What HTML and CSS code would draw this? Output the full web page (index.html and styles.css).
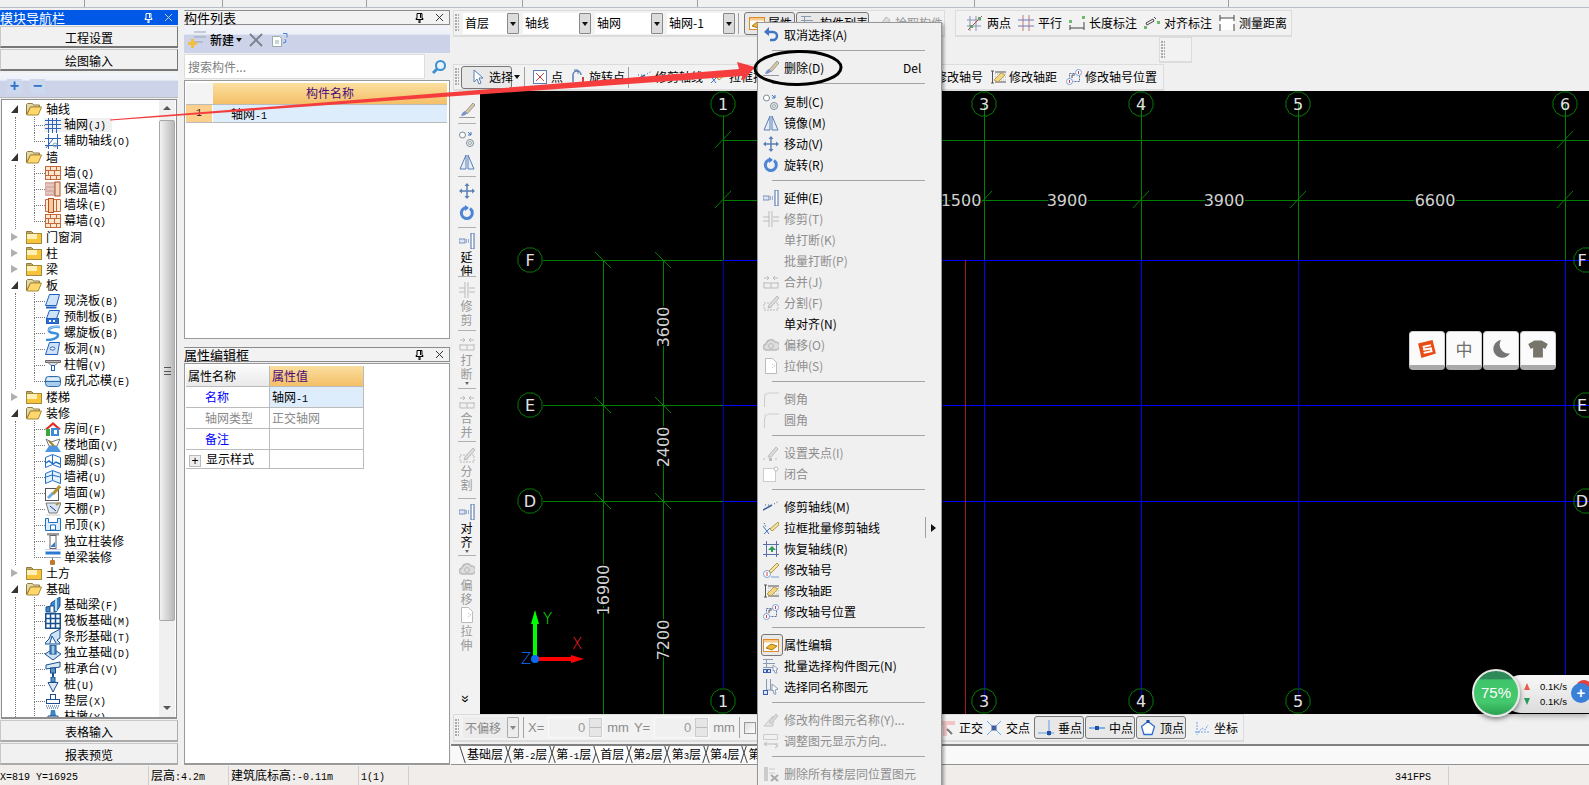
FILE: index.html
```html
<!DOCTYPE html>
<html lang="zh">
<head>
<meta charset="utf-8">
<title>绘图输入</title>
<link rel="stylesheet" href="styles.css">
</head>
<body>
<svg class="defs" width="0" height="0" aria-hidden="true">
<polygon id="oct" points="12,3.200 8.800,8.800 3.200,12 -3.200,12 -8.800,8.800 -12,3.200 -12,-3.200 -8.800,-8.800 -3.200,-12 3.200,-12 8.800,-8.800 12,-3.200"/>
<symbol id="grid" viewBox="0 0 16 16"><path d="M0 3.500h16M0 7.500h16M0 11.500h16M3.500 1v15M7.500 1v15M11.500 1v15" stroke="#2f62c0" fill="none"/></symbol>
<symbol id="aux" viewBox="0 0 16 16"><path d="M3.500 1v15M12.500 1v15M0 5.500h16M0 12.500h16M1 15L8 6" stroke="#2f62c0" fill="none"/><circle cx="10" cy="12" r="2" fill="none" stroke="#8aa"/></symbol>
<symbol id="brick" viewBox="0 0 16 16"><rect x=".5" y="1.500" width="15" height="13" fill="#fbe6d2" stroke="#c46a3a"/><path d="M1 5.500h14M1 10.500h14M5.500 2v3M11.500 2v3M3.500 6v4M9.500 6v4M5.500 11v3M11.500 11v3" stroke="#c46a3a" fill="none"/></symbol>
<symbol id="insul" viewBox="0 0 16 16"><rect x="0" y="1" width="10" height="14" fill="#d9b0a8"/><path d="M1 4h8M2 8h7M1 12h7" stroke="#efdcd8"/><rect x="10" y="1" width="5" height="14" fill="#f3d8c0" stroke="#a8522a"/></symbol>
<symbol id="pier" viewBox="0 0 16 16"><path d="M.5 2.500h15v12h-15z" fill="#fbe6d2" stroke="#c46a3a"/><rect x="3.500" y="1.500" width="5" height="14" fill="#f7c9a0" stroke="#b5501e"/><path d="M11.500 3v11" stroke="#c46a3a"/></symbol>
<symbol id="slab" viewBox="0 0 16 16"><path d="M4.500 1.500h10l-3 11h-11z" fill="#cfe3f8" stroke="#1f5fbf"/><path d="M1 14.500h10.500" stroke="#1f5fbf" stroke-width="2"/></symbol>
<symbol id="slab2" viewBox="0 0 16 16"><path d="M4.500 1.500h10l-3 8h-10z" fill="#cfe3f8" stroke="#1f5fbf"/><rect x="1.500" y="9.500" width="12" height="5" fill="#2d6fd0" stroke="#1f5fbf"/><path d="M4 12h2M8 12h2" stroke="#fff" stroke-width="2"/></symbol>
<symbol id="spiral" viewBox="0 0 16 16"><path d="M15 2C7 1 3 3 4 6s9 1 9 4-5 5-12 5" fill="none" stroke="#3d8fdc" stroke-width="2.500"/><path d="M15 2C7 1 3 3 4 6" fill="none" stroke="#bfe0fb"/></symbol>
<symbol id="hole" viewBox="0 0 16 16"><path d="M4.500 1.500h10l-2 12h-12z" fill="#cfe3f8" stroke="#1f5fbf"/><ellipse cx="7.500" cy="7.500" rx="2.500" ry="1.500" fill="#fff" stroke="#1f5fbf"/></symbol>
<symbol id="cap" viewBox="0 0 16 16"><path d="M.5 3.500h15v2h-15z" fill="#bbb" stroke="#666"/><path d="M3 5.500l3 3h4l3-3z" fill="#ddd" stroke="#777"/><rect x="6.500" y="8.500" width="3" height="5" fill="#fff" stroke="#1f5fbf"/></symbol>
<symbol id="core" viewBox="0 0 16 16"><rect x=".5" y="3.500" width="15" height="10" rx="3" fill="#a9cdec" stroke="#2f6ca8"/><path d="M1 8.500h14" stroke="#2f6ca8"/><rect x="2" y="4.500" width="12" height="3" rx="1" fill="#dff0fb"/></symbol>
<symbol id="room" viewBox="0 0 16 16"><path d="M0 8l8-7 8 7-2 1-6-5-6 5z" fill="#e0302a"/><rect x="1" y="8" width="4" height="7" fill="#3ca63c"/><rect x="6" y="7" width="8" height="8" fill="#3f8ad8"/><rect x="9" y="9" width="3" height="4" fill="#fff"/></symbol>
<symbol id="floor" viewBox="0 0 16 16"><path d="M1 2l5 3 9-3-3 7H4z" fill="#fff" stroke="#777"/><path d="M0 15l4-6h8l4 6z" fill="#4c97e0"/><path d="M4 4l5 5" stroke="#a08030" stroke-width="2"/></symbol>
<symbol id="skirt" viewBox="0 0 16 16"><path d="M.5 4.500l7-3 8 3v10l-8-3-7 3z" fill="#fff" stroke="#1f6fc8"/><path d="M1 10l3-2 4 3 3-2 4 2" fill="none" stroke="#1f6fc8" stroke-width="1.500"/><path d="M7.500 2v9" stroke="#1f6fc8"/></symbol>
<symbol id="dado" viewBox="0 0 16 16"><path d="M.5 4.500l7-3 8 3v10l-8-3-7 3z" fill="#e4f1fb" stroke="#1f6fc8"/><path d="M1 8l6-2 8 2" fill="none" stroke="#1f6fc8"/><path d="M7.500 2v9" stroke="#1f6fc8"/></symbol>
<symbol id="wface" viewBox="0 0 16 16"><rect x=".5" y="3.500" width="13" height="12" fill="#fff" stroke="#555"/><path d="M3 13L8 8" stroke="#6fa8e0" stroke-width="3"/><path d="M8 9l7-8" stroke="#b09030" stroke-width="3"/></symbol>
<symbol id="ceil" viewBox="0 0 16 16"><path d="M1 2h15l-4 10H4z" fill="#d6e6f7" stroke="#777"/><path d="M5 5l6 5" stroke="#335" /><path d="M11 4l3-2" stroke="#b09030" stroke-width="2"/><path d="M1 14h14" stroke="#ccc"/></symbol>
<symbol id="dropc" viewBox="0 0 16 16"><path d="M.5 1.500h3v4h9v-4h3v12h-15z" fill="#dceefc" stroke="#1f6fc8"/><path d="M5.500 8h5v5h-5z" fill="#fff" stroke="#1f6fc8"/></symbol>
<symbol id="colf" viewBox="0 0 16 16"><rect x="2" y="0" width="12" height="2.500" fill="#999"/><rect x="5" y="2.500" width="6" height="13" fill="#fff" stroke="#666"/><path d="M6 13l4-4v5H6z" fill="#2f7fd0"/></symbol>
<symbol id="beamf" viewBox="0 0 16 16"><rect x=".5" y="2.500" width="15" height="3" fill="#2a78d0"/><path d="M0 0h16M0 8.500h16" stroke="#9ab"/><rect x="5" y="11" width="5" height="5" rx="1" fill="#c07a30"/><rect x="7" y="9" width="1" height="2" fill="#777"/></symbol>
<symbol id="fbeam" viewBox="0 0 16 16"><path d="M6 6l9-6v9l-4 6H1V10l5-1z" fill="#3f86c8" stroke="#174f8f"/><path d="M5 15V9h4v6" fill="#fff" stroke="#174f8f"/><path d="M11 2v12" stroke="#bcdcf5" stroke-width="2"/></symbol>
<symbol id="raft" viewBox="0 0 16 16"><rect x=".5" y=".5" width="15" height="15" fill="#fff" stroke="#174f8f" stroke-width="2"/><path d="M5.500 1v14M10.500 1v14M1 5.500h14M1 10.500h14" stroke="#174f8f" stroke-width="1.500"/></symbol>
<symbol id="strip" viewBox="0 0 16 16"><path d="M6 5l9-5v9l-3 2 3 3v1H0v-1l4-4z" fill="#cfe3f8" stroke="#174f8f"/><path d="M5 14l2-7 4 7" fill="#fff" stroke="#174f8f"/></symbol>
<symbol id="iso" viewBox="0 0 16 16"><path d="M0 9l8-5 8 5-8 6z" fill="#cfe3f8" stroke="#174f8f"/><rect x="5" y="0" width="6" height="9" fill="#5c94c8" stroke="#174f8f"/><path d="M8 1v8" stroke="#dff"/></symbol>
<symbol id="pcap" viewBox="0 0 16 16"><path d="M1 4l14-3v5L1 8z" fill="#dbe7f3" stroke="#174f8f"/><rect x="5.500" y="7" width="5" height="5" fill="#5c94c8" stroke="#174f8f"/><path d="M8 12v4" stroke="#174f8f" stroke-width="2"/></symbol>
<symbol id="pile" viewBox="0 0 16 16"><rect x="6" y="0" width="4" height="5" fill="#5c94c8" stroke="#174f8f"/><path d="M3 5.500h10L10 11l-2 4-2-4z" fill="#dbe7f3" stroke="#174f8f"/></symbol>
<symbol id="cush" viewBox="0 0 16 16"><rect x="5.500" y="1.500" width="5" height="5" fill="#fff" stroke="#174f8f"/><rect x="1.500" y="6.500" width="13" height="4" fill="#fff" stroke="#174f8f"/><path d="M1 13h14M2 15h12" stroke="#174f8f" stroke-dasharray="1 1"/></symbol>
<symbol id="mpier" viewBox="0 0 16 16"><path d="M6 1h4l1 6H5z" fill="#3f86c8"/><path d="M3 7h10v8H3z" fill="#dbe7f3" stroke="#174f8f"/></symbol>
<symbol id="fopen" viewBox="0 0 16 14"><path d="M.5 12.500V2.500l1-1h5l1 1.500h6v2h-9L.5 12.500z" fill="#e7d9a5" stroke="#8f7a40"/><path d="M.8 13l3.700-8h11l-3.300 8z" fill="#ffd76a" stroke="#a68a3c"/></symbol>
<symbol id="fclosed" viewBox="0 0 16 14"><path d="M.5 3V1.500h5L7 3z" fill="#e7d9a5" stroke="#8f7a40"/><rect x=".5" y="3.500" width="15" height="10" fill="#f7c33a" stroke="#a68a3c"/><rect x="1" y="4" width="10" height="5" fill="#fff0b5"/></symbol>
<symbol id="undo" viewBox="0 0 16 16"><path d="M4 5h6a4 4 0 010 8H7" fill="none" stroke="#3f75c4" stroke-width="2.500"/><path d="M6 0v9L1 5z" fill="#3f75c4"/></symbol>
<symbol id="brush" viewBox="0 0 16 16"><path d="M6 10L14 1l2 2-8 9z" fill="#d8c8a0" stroke="#999"/><path d="M2 14c1-3 2-4 4-5l2 2c-1 2-3 3-6 3z" fill="#7b91c8"/><path d="M0 15.500h16" stroke="#9a9a9a"/></symbol>
<symbol id="copy" viewBox="0 0 16 16"><circle cx="3.500" cy="4" r="3" fill="#fff" stroke="#7a8a9a"/><circle cx="11" cy="12" r="3.500" fill="none" stroke="#7a8a9a"/><circle cx="11" cy="12" r="1.500" fill="none" stroke="#9aa"/><path d="M9 1l3 3m0-3v3H9" fill="none" stroke="#3f75c4"/></symbol>
<symbol id="mirror" viewBox="0 0 16 16"><path d="M7 1L1 15h6zM9 1l6 14H9z" fill="#e4edf8" stroke="#5a7fb5"/></symbol>
<symbol id="move" viewBox="0 0 16 16"><path d="M8 1v14M1 8h14" stroke="#5a7fb5" stroke-width="1.500"/><path d="M8 0l2.500 3h-5zM8 16l2.500-3h-5zM0 8l3-2.500v5zM16 8l-3-2.500v5z" fill="#5a7fb5"/></symbol>
<symbol id="rot" viewBox="0 0 16 16"><path d="M11 3.500A5.500 5.500 0 118 2.500" fill="none" stroke="#4c85d8" stroke-width="3"/><path d="M6 0v6l4-3z" fill="#4c85d8"/></symbol>
<symbol id="ext" viewBox="0 0 16 16"><rect x="0" y="6" width="6" height="4" fill="#dce6f5" stroke="#4a6da8" stroke-width=".7"/><path d="M7 7h3M7 9h3" stroke="#4a6da8" stroke-dasharray="1 1"/><rect x="12" y="0" width="3" height="16" fill="#fff" stroke="#4a6da8"/></symbol>
<symbol id="trim" viewBox="0 0 16 16"><path d="M0 6h6M0 10h6M10 6h6M10 10h6" stroke="#bbb"/><path d="M6 0v16M9 0v16" stroke="#bbb"/></symbol>
<symbol id="merge" viewBox="0 0 16 16"><path d="M1 9h14v5H1zM1 9v-1M15 9V8M8 9v5" fill="none" stroke="#bbb"/><path d="M1 4h5m-2-2l2 2-2 2M15 4h-5m2-2l-2 2 2 2" fill="none" stroke="#bbb"/></symbol>
<symbol id="split" viewBox="0 0 16 16"><path d="M1 8h14v7H1zM8 8v7" fill="none" stroke="#bbb" stroke-dasharray="2 1"/><path d="M6 10l8-9 2 2-8 9-3 1z" fill="#ddd" stroke="#bbb"/></symbol>
<symbol id="offs" viewBox="0 0 16 16"><path d="M4 13a3 3 0 01-1-6 5 5 0 019-2 4 4 0 011 8z" fill="#ddd" stroke="#bbb" stroke-width="1.500"/><circle cx="8" cy="9" r="2.500" fill="none" stroke="#bbb"/></symbol>
<symbol id="strch" viewBox="0 0 16 16"><path d="M2.500.5h7l4 4v11h-11z" fill="#fff" stroke="#bbb"/><path d="M9 6l3 2-3 2" stroke="#bbb" fill="none" stroke-dasharray="1 1"/></symbol>
<symbol id="cham" viewBox="0 0 16 16"><path d="M1.500 16V7c0-3 3-5 6-5H16" fill="none" stroke="#ccc"/><path d="M1 4l3-3" stroke="#ccc" stroke-dasharray="1 1"/></symbol>
<symbol id="grip" viewBox="0 0 16 16"><path d="M6 10l7-8 2 2-7 8H5z" fill="#ddd" stroke="#bbb"/><path d="M0 14h3M12 14h3" stroke="#bbb" stroke-dasharray="2 1"/><rect x="6" y="13" width="3" height="3" fill="#bbb"/></symbol>
<symbol id="closeg" viewBox="0 0 16 16"><rect x=".5" y="2.500" width="12" height="13" fill="#fff" stroke="#ccc"/><circle cx="13" cy="3" r="2" fill="#fff" stroke="#bbb"/></symbol>
<symbol id="taxis" viewBox="0 0 16 16"><path d="M0 11L9 6" stroke="#3a5f9a" stroke-width="1.500"/><path d="M11 5l5-3M2 6h6" stroke="#3a5f9a" stroke-dasharray="1 2"/></symbol>
<symbol id="boxt" viewBox="0 0 16 16"><path d="M7 9l8-7 1 3-7 6z" fill="#f4e19a" stroke="#b09a50"/><path d="M0 6l6 8M1 14l6-6" stroke="#3f75c4"/><path d="M1 3l2 4" stroke="#3a5f9a" stroke-dasharray="1 1"/></symbol>
<symbol id="rest" viewBox="0 0 16 16"><path d="M3.500 0v16M13.500 0v16M0 3.500h16M0 13.500h16" stroke="#5a6fa8" fill="none"/><path d="M9 5l4 4H10v2H8V9H5z" fill="#2f9a5a"/></symbol>
<symbol id="eno" viewBox="0 0 16 16"><circle cx="4" cy="12" r="3.500" fill="#fff" stroke="#7ba0d8"/><path d="M4 10v4" stroke="#d04040"/><path d="M6 9l8-8 2 2-8 8z" fill="#f4e19a" stroke="#b09a50"/><path d="M8 15h8" stroke="#7ba0d8"/></symbol>
<symbol id="edist" viewBox="0 0 16 16"><path d="M1 2h3M2.500 2v12M1 14h3M5 3h11M5 13h11" stroke="#555" stroke-dasharray="none" fill="none"/><path d="M5 5h11M5 8h11M5 11h11" stroke="#bbb" stroke-dasharray="1 1"/><path d="M4 11l7-7 4 2-7 7z" fill="#f1d685" stroke="#c0a050"/></symbol>
<symbol id="epos" viewBox="0 0 16 16"><path d="M3.500 4.500h10v8h-10z" fill="none" stroke="#5a6fa8" stroke-dasharray="2 1"/><circle cx="3.500" cy="12.500" r="3" fill="#fff" stroke="#7ba0d8"/><circle cx="12.500" cy="3.500" r="3" fill="#fff" stroke="#7ba0d8"/><path d="M3.500 11v3M12.500 2v3" stroke="#d04040"/><path d="M6 6h3M6 6v3" stroke="#555"/></symbol>
<symbol id="prop" viewBox="0 0 16 16"><rect x=".5" y="2.500" width="15" height="12" fill="#fff" stroke="#e08a28"/><rect x="1" y="3" width="14" height="2.500" fill="#f7c98a"/><path d="M3 11l5-4 6 2-5 4z" fill="#f0b830" stroke="#a67c1a"/></symbol>
<symbol id="batch" viewBox="0 0 16 16"><path d="M0 1.500h10M0 5.500h12M0 9.500h10M3.500 1v9" stroke="#8a9ab5" fill="none"/><rect x=".5" y="11.500" width="3" height="3" fill="#dce6f5" stroke="#3a5fb0"/><rect x="4.500" y="11.500" width="3" height="3" fill="#dce6f5" stroke="#3a5fb0"/><path d="M10 7l5 4-2 1 1 3-2 0-1-3-1 1z" fill="#fff" stroke="#8a9ab5"/></symbol>
<symbol id="same" viewBox="0 0 16 16"><path d="M3.500 0v11M7.500 0v11M3 11h9" stroke="#8a9ab5" fill="none"/><rect x=".5" y="11.500" width="4" height="4" fill="#dce6f5" stroke="#3a5fb0"/><path d="M9 5l6 5-3 1 1 4-2 0-1-4-1 1z" fill="#fff" stroke="#8a9ab5"/></symbol>
<symbol id="renm" viewBox="0 0 16 16"><path d="M1 14L10 4v10z" fill="#e6e6e6" stroke="#c4c4c4"/><path d="M6 10l7-8 2 2-7 8z" fill="#d8d8d8" stroke="#c4c4c4"/></symbol>
<symbol id="adj" viewBox="0 0 16 16"><path d="M.5 1.500h14v5H.5z" fill="none" stroke="#ccc"/><path d="M4 9l-3 2 3 2M1 11h14M12 11l3 2-3 2" fill="none" stroke="#bbb"/></symbol>
<symbol id="delall" viewBox="0 0 16 16"><rect x="1" y="1" width="4" height="14" fill="#ccc"/><path d="M6 3h6M6 7h6" stroke="#ccc"/><path d="M8 9l7 6M15 9l-7 6" stroke="#aaa" stroke-width="2"/></symbol>
<symbol id="pick" viewBox="0 0 16 16"><path d="M3 15l2-6 5-7 4 3-5 7z" fill="#ddd" stroke="#bbb"/></symbol>
<symbol id="sel" viewBox="0 0 16 16"><path d="M4 1v12l3-3 2 5 2-1-2-5h4z" fill="#fff" stroke="#5a7fb5"/></symbol>
<symbol id="pt" viewBox="0 0 16 16"><rect x="1.500" y="1.500" width="13" height="13" fill="#fff" stroke="#5a7fb5"/><path d="M4 4l8 8M12 4l-8 8" stroke="#d04040"/></symbol>
<symbol id="rpt" viewBox="0 0 16 16"><path d="M3 13V6a4 4 0 018 0" fill="none" stroke="#5a7fb5" stroke-width="1.500"/><path d="M4 1h4v4" fill="none" stroke="#5a7fb5"/><path d="M12 8h2v6h-2z" fill="#d04040"/></symbol>
<symbol id="two" viewBox="0 0 16 16"><path d="M3 1v15M9 1v15M0 5h14M0 11h14" stroke="#8a90b5" fill="none"/><path d="M1 15L15 1" stroke="#c04040"/><rect x="3" y="10" width="3" height="3" fill="#60a860"/><rect x="11" y="2" width="3" height="3" fill="#60a860"/></symbol>
<symbol id="par" viewBox="0 0 16 16"><path d="M5 0v16M11 0v16" stroke="#c07878"/><path d="M0 5h16M0 11h16" stroke="#7078b8"/></symbol>
<symbol id="dlen" viewBox="0 0 16 16"><rect x="0" y="5" width="3" height="3" fill="#70b870"/><rect x="13" y="1" width="3" height="3" fill="#70b870"/><path d="M1 10v5M15 7v8M1 13h14" stroke="#444" fill="none"/></symbol>
<symbol id="dali" viewBox="0 0 16 16"><path d="M2 8l7-4 1 2-7 4z" fill="none" stroke="#444"/><rect x="0" y="11" width="3" height="3" fill="#70b870"/><rect x="13" y="6" width="3" height="3" fill="#70b870"/><path d="M10 2l2 2" stroke="#444"/></symbol>
<symbol id="meas" viewBox="0 0 16 16"><rect x="1" y="2" width="14" height="13" fill="#fff"/><path d="M1 0v6M15 0v6M1 3h14M1 9v7M15 9v7" stroke="#444"/></symbol>
<symbol id="ortho" viewBox="0 0 16 16"><path d="M0 3h16M6 3v13" stroke="#f2c4c4" stroke-width="4"/><path d="M8 9l5 5" stroke="#777" stroke-width="2"/></symbol>
<symbol id="cross" viewBox="0 0 16 16"><path d="M1 1l14 14M15 1L1 15" stroke="#6fa8e8"/><rect x="5.500" y="5.500" width="5" height="5" fill="#40609e"/></symbol>
<symbol id="perp" viewBox="0 0 16 16"><path d="M11 0v16M0 13h16" stroke="#5f9be0"/><rect x="9" y="11" width="4" height="4" fill="#1f4f9f"/></symbol>
<symbol id="midp" viewBox="0 0 16 16"><path d="M0 8h16" stroke="#5f9be0" stroke-width="1.500"/><rect x="6" y="6" width="4" height="4" fill="#1f4f9f"/></symbol>
<symbol id="vert" viewBox="0 0 16 16"><path d="M8 1.500l6.500 5-2.500 8H4l-2.500-8z" fill="#fff" stroke="#2f6fd0" stroke-width="1.300"/><rect x="6.500" y="0" width="3" height="3" fill="#1f4f9f"/></symbol>
<symbol id="coord" viewBox="0 0 16 16"><path d="M3 2v13M1 12h14M4 13l4-5 3 2 3-5" fill="none" stroke="#6fa8e8" stroke-dasharray="2 1"/></symbol>
<symbol id="newc" viewBox="0 0 18 18"><path d="M6 1h12M6 6h12M6 11h9" stroke="#9aa3b8"/><rect x="0" y="11" width="9" height="3" fill="#f2c040"/><rect x="3" y="8" width="3" height="9" fill="#f2c040"/></symbol>
<symbol id="xx" viewBox="0 0 16 16"><path d="M2 2l12 12M14 2L2 14" stroke="#7a7f8a" stroke-width="1.800"/></symbol>
<symbol id="cpy2" viewBox="0 0 16 16"><path d="M.5 4.500h7l2 2v8h-9z" fill="#fff" stroke="#9aa"/><path d="M3 9h4M3 11h4" stroke="#9aa"/><path d="M11 1.500h4v4M11 11l3-1-1-3" fill="none" stroke="#4c85d8"/></symbol>
<symbol id="pin" viewBox="0 0 9 10"><path d="M2 .5h5v5h1v1H1v-1h1zM4 6.500h1V10H4zM5.500 1v4" fill="none" stroke="#000"/></symbol>
<symbol id="cl" viewBox="0 0 9 9"><path d="M1 1l7 7M8 1L1 8" stroke="#333"/></symbol>
</svg>

<div class="topstrip"><i class="c1"></i><i class="c2"></i><i class="c3"></i><i class="c4"></i><i class="c5"></i><i class="c6"></i><i class="c7"></i></div>

<main class="main">
  <aside class="nav">
    <div class="title on"><span>模块导航栏</span><svg class="pin"><use href="#pin"/></svg><svg class="cl"><use href="#cl"/></svg></div>
    <button class="navbtn">工程设置</button>
    <button class="navbtn">绘图输入</button>
    <div class="bluebar nav-tools"><span class="pm">+</span><span class="pm">−</span></div>
    <div class="treebox">
      <div class="tree">
        <div class="row"><b class="exp open"></b><svg class="fold"><use href="#fopen"/></svg><span>轴线</span></div>
        <div class="kids">
          <div class="kid sel-k"><svg class="ki"><use href="#grid"/></svg><span>轴网<em>(J)</em></span></div>
          <div class="kid"><svg class="ki"><use href="#aux"/></svg><span>辅助轴线<em>(O)</em></span></div>
        </div>
        <div class="row"><b class="exp open"></b><svg class="fold"><use href="#fopen"/></svg><span>墙</span></div>
        <div class="kids">
          <div class="kid"><svg class="ki"><use href="#brick"/></svg><span>墙<em>(Q)</em></span></div>
          <div class="kid"><svg class="ki"><use href="#insul"/></svg><span>保温墙<em>(Q)</em></span></div>
          <div class="kid"><svg class="ki"><use href="#pier"/></svg><span>墙垛<em>(E)</em></span></div>
          <div class="kid"><svg class="ki"><use href="#brick"/></svg><span>幕墙<em>(Q)</em></span></div>
        </div>
        <div class="row"><b class="exp"></b><svg class="fold"><use href="#fclosed"/></svg><span>门窗洞</span></div>
        <div class="row"><b class="exp"></b><svg class="fold"><use href="#fclosed"/></svg><span>柱</span></div>
        <div class="row"><b class="exp"></b><svg class="fold"><use href="#fclosed"/></svg><span>梁</span></div>
        <div class="row"><b class="exp open"></b><svg class="fold"><use href="#fopen"/></svg><span>板</span></div>
        <div class="kids">
          <div class="kid"><svg class="ki"><use href="#slab"/></svg><span>现浇板<em>(B)</em></span></div>
          <div class="kid"><svg class="ki"><use href="#slab2"/></svg><span>预制板<em>(B)</em></span></div>
          <div class="kid"><svg class="ki"><use href="#spiral"/></svg><span>螺旋板<em>(B)</em></span></div>
          <div class="kid"><svg class="ki"><use href="#hole"/></svg><span>板洞<em>(N)</em></span></div>
          <div class="kid"><svg class="ki"><use href="#cap"/></svg><span>柱帽<em>(V)</em></span></div>
          <div class="kid"><svg class="ki"><use href="#core"/></svg><span>成孔芯模<em>(E)</em></span></div>
        </div>
        <div class="row"><b class="exp"></b><svg class="fold"><use href="#fclosed"/></svg><span>楼梯</span></div>
        <div class="row"><b class="exp open"></b><svg class="fold"><use href="#fopen"/></svg><span>装修</span></div>
        <div class="kids">
          <div class="kid"><svg class="ki"><use href="#room"/></svg><span>房间<em>(F)</em></span></div>
          <div class="kid"><svg class="ki"><use href="#floor"/></svg><span>楼地面<em>(V)</em></span></div>
          <div class="kid"><svg class="ki"><use href="#skirt"/></svg><span>踢脚<em>(S)</em></span></div>
          <div class="kid"><svg class="ki"><use href="#dado"/></svg><span>墙裙<em>(U)</em></span></div>
          <div class="kid"><svg class="ki"><use href="#wface"/></svg><span>墙面<em>(W)</em></span></div>
          <div class="kid"><svg class="ki"><use href="#ceil"/></svg><span>天棚<em>(P)</em></span></div>
          <div class="kid"><svg class="ki"><use href="#dropc"/></svg><span>吊顶<em>(K)</em></span></div>
          <div class="kid"><svg class="ki"><use href="#colf"/></svg><span>独立柱装修</span></div>
          <div class="kid"><svg class="ki"><use href="#beamf"/></svg><span>单梁装修</span></div>
        </div>
        <div class="row"><b class="exp"></b><svg class="fold"><use href="#fclosed"/></svg><span>土方</span></div>
        <div class="row"><b class="exp open"></b><svg class="fold"><use href="#fopen"/></svg><span>基础</span></div>
        <div class="kids">
          <div class="kid"><svg class="ki"><use href="#fbeam"/></svg><span>基础梁<em>(F)</em></span></div>
          <div class="kid"><svg class="ki"><use href="#raft"/></svg><span>筏板基础<em>(M)</em></span></div>
          <div class="kid"><svg class="ki"><use href="#strip"/></svg><span>条形基础<em>(T)</em></span></div>
          <div class="kid"><svg class="ki"><use href="#iso"/></svg><span>独立基础<em>(D)</em></span></div>
          <div class="kid"><svg class="ki"><use href="#pcap"/></svg><span>桩承台<em>(V)</em></span></div>
          <div class="kid"><svg class="ki"><use href="#pile"/></svg><span>桩<em>(U)</em></span></div>
          <div class="kid"><svg class="ki"><use href="#cush"/></svg><span>垫层<em>(X)</em></span></div>
          <div class="kid"><svg class="ki"><use href="#mpier"/></svg><span>柱墩<em>(Y)</em></span></div>
        </div>
      </div>
      <div class="sbar"><div class="sarrow up"></div><div class="sthumb"><span class="sgrip"></span></div><div class="sspace"></div><div class="sarrow down"></div></div>
    </div>
    <button class="navbtn low">表格输入</button>
    <button class="navbtn low">报表预览</button>
  </aside>

  <section class="comp">
    <div class="title"><span>构件列表</span><svg class="pin"><use href="#pin"/></svg><svg class="cl"><use href="#cl"/></svg></div>
    <div class="bluebar comp-tools">
      <svg class="i18"><use href="#newc"/></svg><span class="newtxt">新建</span><b class="drop"></b>
      <svg class="i xx"><use href="#xx"/></svg><svg class="i"><use href="#cpy2"/></svg>
    </div>
    <div class="search"><span>搜索构件...</span>
      <svg class="mag" viewBox="0 0 16 16"><circle cx="9.500" cy="6.500" r="4.500" fill="#e8f3fb" stroke="#3a90d0" stroke-width="2"/><path d="M6 10l-4 4" stroke="#3a90d0" stroke-width="3"/></svg>
    </div>
    <div class="listbox">
      <div class="lhead"><div class="lcorner"></div><div class="lname">构件名称</div></div>
      <div class="lrow"><div class="lnum">1</div><div class="lval">轴网<em>-1</em></div></div>
    </div>
    <div class="title second"><span>属性编辑框</span><svg class="pin"><use href="#pin"/></svg><svg class="cl"><use href="#cl"/></svg></div>
    <div class="propbox">
      <div class="ptable">
        <div class="pc ph1">属性名称</div><div class="pc ph2">属性值</div>
        <div class="pc blue">名称</div><div class="pc sel">轴网<em>-1</em></div>
        <div class="pc gray ind">轴网类型</div><div class="pc gray">正交轴网</div>
        <div class="pc blue">备注</div><div class="pc"></div>
        <div class="pc lastr"><span class="plus">+</span>显示样式</div><div class="pc lastr"></div>
      </div>
    </div>
  </section>

  <section class="work">
    <div class="rowtb r1">
      <div class="tb tb1">
        <span class="grip"></span>
        <div class="combo w56"><span>首层</span><b></b></div>
        <div class="combo w68"><span>轴线</span><b></b></div>
        <div class="combo w68"><span>轴网</span><b></b></div>
        <div class="combo w68"><span>轴网-1</span><b></b></div>
        <span class="sep s1"></span>
        <div class="tbtn on w50"><svg class="i"><use href="#prop"/></svg><span>属性</span></div>
        <div class="tbtn on w73"><svg class="i"><use href="#batch"/></svg><span>构件列表</span></div>
        <div class="tbtn dis pickb"><svg class="i"><use href="#pick"/></svg><span>拾取构件</span></div>
      </div>
      <div class="tb tb2">
        <div class="tbtn"><svg class="i"><use href="#two"/></svg><span>两点</span></div>
        <div class="tbtn"><svg class="i"><use href="#par"/></svg><span>平行</span></div>
        <div class="tbtn"><svg class="i"><use href="#dlen"/></svg><span>长度标注</span></div>
        <div class="tbtn"><svg class="i"><use href="#dali"/></svg><span>对齐标注</span></div>
        <div class="tbtn"><svg class="i"><use href="#meas"/></svg><span>测量距离</span></div>
      </div>
    </div>
    <div class="rowtb r2"><div class="tb tbmini"><span class="grip"></span></div></div>
    <div class="rowtb r3">
      <div class="tb tb3">
        <span class="grip"></span>
        <div class="tbtn on selbtn"><svg class="i"><use href="#sel"/></svg><span>选择</span></div><b class="drop sd"></b>
        <span class="sep s2"></span>
        <div class="tbtn"><svg class="i"><use href="#pt"/></svg><span>点</span></div>
        <div class="tbtn"><svg class="i"><use href="#rpt"/></svg><span>旋转点</span></div>
        <span class="sep s3"></span>
        <div class="tbtn"><svg class="i"><use href="#taxis"/></svg><span>修剪轴线</span></div>
        <div class="tbtn"><svg class="i"><use href="#boxt"/></svg><span>拉框批量修剪轴线</span></div>
        <div class="tbtn hidsp"><svg class="i"><use href="#eno"/></svg><span>修改轴号</span></div>
        <div class="tbtn"><svg class="i"><use href="#edist"/></svg><span>修改轴距</span></div>
        <div class="tbtn lastpos"><svg class="i"><use href="#epos"/></svg><span>修改轴号位置</span></div>
      </div>
    </div>
    <div class="stage">
      <div class="vtb">
        <div class="vi h26"><svg class="i"><use href="#brush"/></svg></div><span class="vsep"></span>
        <div class="vi h24"><svg class="i"><use href="#copy"/></svg></div>
        <div class="vi h24"><svg class="i"><use href="#mirror"/></svg></div><span class="vsep"></span>
        <div class="vi h22"><svg class="i"><use href="#move"/></svg></div>
        <div class="vi h22"><svg class="i"><use href="#rot"/></svg></div><span class="vsep"></span>
        <div class="vi lab l42"><svg class="i"><use href="#ext"/></svg><span>延<br>伸</span></div><span class="vsep"></span>
        <div class="vi lab dis l47"><svg class="i"><use href="#trim"/></svg><span>修<br>剪</span></div><span class="vsep"></span>
        <div class="vi lab dis l51"><svg class="i"><use href="#merge"/></svg><span>打<br>断</span><b class="tri"></b></div><span class="vsep"></span>
        <div class="vi lab dis l46"><svg class="i"><use href="#merge"/></svg><span>合<br>并</span></div><span class="vsep"></span>
        <div class="vi lab dis l50"><svg class="i"><use href="#split"/></svg><span>分<br>割</span></div><span class="vsep"></span>
        <div class="vi lab l50"><svg class="i"><use href="#ext"/></svg><span>对<br>齐</span><b class="tri"></b></div><span class="vsep"></span>
        <div class="vi lab dis l46"><svg class="i"><use href="#offs"/></svg><span>偏<br>移</span></div>
        <div class="vi lab dis l42"><svg class="i"><use href="#strch"/></svg><span>拉<br>伸</span></div>
        <div class="chev">»</div>
      </div>
      <svg class="canvas" viewBox="480 91 1109 623" width="1109" height="623">
        <rect x="480" y="91" width="1109" height="623" fill="#000"/>
        <g class="gl">
          <path d="M723 116V260M984 104V260M1141 104V260M1298 104V260M1565 104V260"/>
          <path d="M723 140H1589M723 200H1589M543 260H723M543 405H723M543 501H723M603 260V714M663 260V714"/>
          <path d="M715 148l16-17M715 208l16-17M595 252l16 16M655 252l16 16M655 397l16 16M595 397l16 16M655 493l16 16M595 493l16 16M1557 148l16-17M976 208l16-17M1133 208l16-17M1290 208l16-17M1557 208l16-17"/>
        </g>
        <g class="bl">
          <path d="M723 260H1589M723 405H1589M723 501H1589"/>
          <path d="M984 260V701M1141 260V701M1565 260V701"/>
          <path class="dk" d="M723 260V688M1298 260V701"/>
        </g>
        <path d="M965.500 260V714" stroke="#a01818" fill="none"/>
        <g class="cir">
          <use href="#oct" x="723" y="104"/><use href="#oct" x="984" y="104"/><use href="#oct" x="1141" y="104"/><use href="#oct" x="1298" y="104"/><use href="#oct" x="1565" y="104"/>
          <use href="#oct" x="723" y="701"/><use href="#oct" x="984" y="701"/><use href="#oct" x="1141" y="701"/><use href="#oct" x="1298" y="701"/>
          <use href="#oct" x="530" y="260"/><use href="#oct" x="530" y="405"/><use href="#oct" x="530" y="501"/>
          <use href="#oct" x="1586" y="260"/><use href="#oct" x="1586" y="405"/><use href="#oct" x="1586" y="501"/>
        </g>
        <g class="lbl">
          <text x="723" y="104">1</text><text x="984" y="104">3</text><text x="1141" y="104">4</text><text x="1298" y="104">5</text><text x="1565" y="104">6</text>
          <text x="723" y="701">1</text><text x="984" y="701">3</text><text x="1141" y="701">4</text><text x="1298" y="701">5</text>
          <text x="530" y="260">F</text><text x="530" y="405">E</text><text x="530" y="501">D</text>
          <text x="1582" y="260">F</text><text x="1582" y="405">E</text><text x="1582" y="501">D</text>
        </g>
        <g class="dim">
          <text x="961" y="200">1500</text><text x="1067" y="200">3900</text><text x="1224" y="200">3900</text><text x="1435" y="200">6600</text>
          <text transform="rotate(-90 663 327)" x="663" y="327">3600</text>
          <text transform="rotate(-90 663 447)" x="663" y="447">2400</text>
          <text transform="rotate(-90 663 640)" x="663" y="640">7200</text>
          <text transform="rotate(-90 603 590)" x="603" y="590">16900</text>
        </g>
        <path d="M535 658V622" stroke="#00ff00" stroke-width="4"/><path d="M535 610l-4 14h8z" fill="#00ff00"/>
        <path d="M535 659H574" stroke="#ff0000" stroke-width="4"/><path d="M584 659l-13-4v8z" fill="#ff0000"/>
        <circle cx="535" cy="659" r="4" fill="#0a6cf0"/>
        <text class="ax" x="543" y="624" fill="#00ff00">Y</text>
        <text class="ax" x="572" y="649" fill="#ff2020">X</text>
        <text class="ax" x="521" y="664" fill="#1070ff">Z</text>
      </svg>
    </div>
    <div class="rowtb r4">
      <div class="tb tb4">
        <span class="grip"></span>
        <div class="combo w56 cdis"><span>不偏移</span><b></b></div>
        <span class="sep s4"></span>
        <span class="lt">X=</span><div class="spin"><span>0</span><i></i></div><span class="lt mm">mm</span>
        <span class="lt yl">Y=</span><div class="spin"><span>0</span><i></i></div><span class="lt mm">mm</span>
        <span class="sep s5"></span><span class="chk"></span>
        <div class="tbtn orth"><svg class="i"><use href="#ortho"/></svg><span>正交</span></div>
        <div class="tbtn crossb"><svg class="i"><use href="#cross"/></svg><span>交点</span></div>
        <div class="tbtn on w49 first-snap"><svg class="i"><use href="#perp"/></svg><span>垂点</span></div>
        <div class="tbtn on w49"><svg class="i"><use href="#midp"/></svg><span>中点</span></div>
        <div class="tbtn on w49"><svg class="i"><use href="#vert"/></svg><span>顶点</span></div>
        <div class="tbtn coordb"><svg class="i"><use href="#coord"/></svg><span>坐标</span></div>
      </div>
    </div>
    <div class="tabs">
      <span class="tab t1">基础层</span><span class="tab">第<em>-2</em>层</span><span class="tab">第<em>-1</em>层</span><span class="tab act">首层</span><span class="tab">第<em>2</em>层</span><span class="tab">第<em>3</em>层</span><span class="tab">第<em>4</em>层</span><span class="tab">第</span>
    </div>
  </section>
</main>

<footer class="status">
  <span class="st s-a"><em>X=819 Y=16925</em></span>
  <span class="st s-b">层高<em>:4.2m</em></span>
  <span class="st s-c">建筑底标高<em>:-0.11m</em></span>
  <span class="st s-d"><em>1(1)</em></span>
  <span class="st s-e"><em class="fps">341FPS</em></span>
  <span class="st s-f"></span>
</footer>

<div class="menu">
  <div class="mi"><svg class="i"><use href="#undo"/></svg><span>取消选择(A)</span></div>
  <div class="ms"></div>
  <div class="mi"><svg class="i"><use href="#brush"/></svg><span>删除(D)</span><kbd>Del</kbd></div>
  <div class="ms first"></div>
  <div class="mi"><svg class="i"><use href="#copy"/></svg><span>复制(C)</span></div>
  <div class="mi"><svg class="i"><use href="#mirror"/></svg><span>镜像(M)</span></div>
  <div class="mi"><svg class="i"><use href="#move"/></svg><span>移动(V)</span></div>
  <div class="mi"><svg class="i"><use href="#rot"/></svg><span>旋转(R)</span></div>
  <div class="ms"></div>
  <div class="mi"><svg class="i"><use href="#ext"/></svg><span>延伸(E)</span></div>
  <div class="mi dis"><svg class="i"><use href="#trim"/></svg><span>修剪(T)</span></div>
  <div class="mi dis"><svg class="i"></svg><span>单打断(K)</span></div>
  <div class="mi dis"><svg class="i"></svg><span>批量打断(P)</span></div>
  <div class="mi dis"><svg class="i"><use href="#merge"/></svg><span>合并(J)</span></div>
  <div class="mi dis"><svg class="i"><use href="#split"/></svg><span>分割(F)</span></div>
  <div class="mi"><svg class="i"></svg><span>单对齐(N)</span></div>
  <div class="mi dis"><svg class="i"><use href="#offs"/></svg><span>偏移(O)</span></div>
  <div class="mi dis"><svg class="i"><use href="#strch"/></svg><span>拉伸(S)</span></div>
  <div class="ms"></div>
  <div class="mi dis"><svg class="i"><use href="#cham"/></svg><span>倒角</span></div>
  <div class="mi dis"><svg class="i"><use href="#cham"/></svg><span>圆角</span></div>
  <div class="ms"></div>
  <div class="mi dis"><svg class="i"><use href="#grip"/></svg><span>设置夹点(I)</span></div>
  <div class="mi dis"><svg class="i"><use href="#closeg"/></svg><span>闭合</span></div>
  <div class="ms"></div>
  <div class="mi"><svg class="i"><use href="#taxis"/></svg><span>修剪轴线(M)</span></div>
  <div class="mi"><svg class="i"><use href="#boxt"/></svg><span>拉框批量修剪轴线</span><b class="sub"></b></div>
  <div class="mi"><svg class="i"><use href="#rest"/></svg><span>恢复轴线(R)</span></div>
  <div class="mi"><svg class="i"><use href="#eno"/></svg><span>修改轴号</span></div>
  <div class="mi"><svg class="i"><use href="#edist"/></svg><span>修改轴距</span></div>
  <div class="mi"><svg class="i"><use href="#epos"/></svg><span>修改轴号位置</span></div>
  <div class="ms"></div>
  <div class="mi chk-on"><svg class="i"><use href="#prop"/></svg><span>属性编辑</span></div>
  <div class="mi"><svg class="i"><use href="#batch"/></svg><span>批量选择构件图元(N)</span></div>
  <div class="mi"><svg class="i"><use href="#same"/></svg><span>选择同名称图元</span></div>
  <div class="ms"></div>
  <div class="mi dis"><svg class="i"><use href="#renm"/></svg><span>修改构件图元名称(Y)...</span></div>
  <div class="mi dis"><svg class="i"><use href="#adj"/></svg><span>调整图元显示方向..</span></div>
  <div class="ms"></div>
  <div class="mi dis"><svg class="i"><use href="#delall"/></svg><span>删除所有楼层同位置图元</span></div>
</div>

<svg class="annot" viewBox="0 0 1589 785" width="1589" height="785" aria-hidden="true">
  <polygon points="110,119.500 739,69 737,62 755,67 743,81 742,76 110,120.500" fill="#f53d3d"/>
  <ellipse cx="798" cy="68" rx="43" ry="16.500" fill="none" stroke="#000" stroke-width="3" transform="rotate(-1 798 68)"/>
</svg>

<div class="ime">
  <div class="key"><svg viewBox="0 0 18 18" width="20" height="20"><path d="M1 4l13-3 3 12-13 4z" fill="#ea4a14"/><path d="M12.500 5.500L6 7l.5 2.500 6-1 .5 2.500L6 12.500" fill="none" stroke="#fff" stroke-width="1.800"/></svg></div>
  <div class="key"><span class="zh">中</span></div>
  <div class="key"><svg viewBox="0 0 18 18" width="20" height="20"><path d="M9 1a8 8 0 108 12A8 8 0 019 1z" fill="#757575"/></svg></div>
  <div class="key"><svg viewBox="0 0 18 18" width="22" height="22"><path d="M1 5l5-3h6l5 3-2 4-2-1v8H5V8L3 9z" fill="#77756a"/></svg></div>
</div>

<div class="net">
  <div class="pill">
    <div class="speeds">
      <div class="sp"><i class="up"></i><span>0.1K/s</span></div>
      <div class="sp"><i class="dn"></i><span>0.1K/s</span></div>
    </div>
    <div class="plusb">+</div>
  </div>
  <div class="ball">75%</div>
</div>
</body>
</html>
```

FILE: styles.css
```css
* { box-sizing: border-box; }
html, body { margin: 0; padding: 0; }
body {
  width: 1589px; height: 785px; overflow: hidden; position: relative;
  background: #f0f0f0; color: #000;
  font: 12px/16px "Noto Sans CJK SC", "Liberation Sans", sans-serif;
}
em { font-style: normal; font-family: "Liberation Mono", monospace; font-size: 10px; }
.defs { position: absolute; }
.i { width: 16px; height: 16px; flex: none; display: block; }
.i18 { width: 18px; height: 18px; flex: none; display: block; }

.topstrip { height: 8px; display: flex; background: #f0f0f0; border-bottom: 1px solid #b9bfca; }
.topstrip i { display: block; height: 7px; border-right: 1px solid #9aa0a8; }
.c1 { width: 85px; } .c2 { width: 138px; } .c3 { width: 144px; }
.c4 { width: 156px; } .c5 { width: 175px; } .c6 { width: 277px; }
.c7 { width: 254px; }

.main { display: flex; height: 756px; margin-top: 2px; }

/* docking titles */
.title {
  height: 15px; display: flex; align-items: center; padding-right: 5px;
  background: #f2f2f2; border: 1px solid #8c8c8c; border-left-width: 0; border-radius: 1px;
  font-size: 13px; line-height: 13px; color: #000;
}
.title span { flex: 1; white-space: nowrap; }
.title .pin { width: 9px; height: 10px; margin-right: 11px; }
.title .cl { width: 9px; height: 9px; }
.title.on { background: #0059e6; border-color: #0059e6; color: #fff; padding-right: 4px; }
.title.on .pin, .title.on .cl { filter: invert(1); }
.title.second { margin-top: 8px; }

/* nav */
.nav { width: 178px; flex: none; display: flex; flex-direction: column; }
.navbtn {
  height: 22px; margin: 1px 0 0; padding: 2px 0 0; width: 178px;
  font: 12px/18px "Noto Sans CJK SC", sans-serif; color: #000;
  background: #f1f1f1; border: 1px solid #c8c8c8; border-right-color: #777; border-bottom: 2px solid #777;
}
.navbtn.low { border-color: #c8c8c8 #aaa #aaa #c8c8c8; }
.bluebar { background: linear-gradient(#f3f5fb 0, #eef0f8 30%, #ccd2e8 34%, #cdd3e8 100%); }
.nav-tools { height: 25px; margin-top: 2px; display: flex; align-items: center; gap: 8px; padding: 3px 0 0 7px; border-bottom: 1px solid #bbb; }
.pm { width: 15px; height: 15px; background: #ccd8ee; color: #2f72c8; font: bold 16px/14px "Liberation Sans", sans-serif; text-align: center; }

.treebox { height: 620px; margin: 1px 0 0 1px; width: 176px; display: flex; background: #fff; border: 1px solid #8f8f8f; border-width: 1px 1px 2px 1px; overflow: hidden; }
.tree { flex: 1; padding-top: 1px; min-width: 0; height: 617px; overflow: hidden; }
.row { height: 16px; display: flex; align-items: center; white-space: nowrap; position: relative; padding-left: 9px; }
.row span { margin-left: 4px; }
.exp { width: 7px; height: 8px; flex: none; margin-right: 8px; clip-path: polygon(0 0, 100% 50%, 0 100%); position: relative; }
.exp:not(.open) { background: #b0b0b0; }
.exp.open { background: #333; clip-path: polygon(100% 0, 100% 100%, 0 100%); }
.fold { width: 16px; height: 14px; flex: none; }
.kids { margin-left: 13px; border-left: 1px dotted #777; }
.kid { height: 16px; display: flex; align-items: center; position: relative; padding-left: 29px; white-space: nowrap; }
.kid::before { content: ""; position: absolute; left: 18px; width: 10px; top: 0; height: 8px; border-left: 1px dotted #777; border-bottom: 1px dotted #777; }
.kid:not(:last-child)::after { content: ""; position: absolute; left: 18px; top: 8px; height: 8px; border-left: 1px dotted #777; }
.ki { width: 16px; height: 16px; flex: none; margin-right: 3px; }
.sel-k { background: linear-gradient(#f0f0f0,#f0f0f0) 28px 1px / 68px 14px no-repeat; }

.sbar { width: 16px; margin-right: 1px; flex: none; display: flex; flex-direction: column; background: #f0f0f0; }
.sarrow { height: 17px; position: relative; }
.sarrow.up::after, .sarrow.down::after { content: ""; position: absolute; left: 4px; top: 6px; border: 4px solid transparent; }
.sarrow.up::after { border-bottom: 4px solid #555; border-top: 0; }
.sarrow.down::after { border-top: 4px solid #555; border-bottom: 0; }
.sthumb { height: 501px; margin-top: 3px; display: flex; align-items: center; justify-content: center; background: linear-gradient(90deg, #f2f2f2, #d0d0d0 60%, #b8b8b8); border: 1px solid #a8a8a8; border-radius: 2px; }
.sgrip { width: 7px; height: 8px; border-top: 1px solid #555; border-bottom: 1px solid #555; background: linear-gradient(#555,#555) 0 3px / 7px 1px no-repeat; }
.sspace { flex: 1; }

/* component column */
.comp { width: 266px; flex: none; margin-left: 6px; margin-right: 1px; display: flex; flex-direction: column; }
.comp-tools { height: 27px; margin-top: 1px; display: flex; align-items: center; padding-left: 4px; }
.comp-tools .newtxt { margin-left: 4px; font-weight: 500; }
.drop { width: 0; height: 0; border: 3px solid transparent; border-top: 4px solid #111; border-bottom: 0; margin-left: 2px; }
.xx { margin-left: 6px; }
.comp-tools .i + .i { margin-left: 8px; }
.search { height: 25px; background: #fff; position: relative; display: flex; align-items: center; padding-left: 3px; color: #7f7f7f; border: 1px solid #ddd; margin-top: 1px; width: 241px; }
.mag { width: 16px; height: 16px; position: absolute; left: 246px; top: 4px; }
.listbox { height: 259px; background: #fff; border: 1px solid #999; padding: 2px 2px 0 1px; margin-top: 1px; }
.lhead { display: flex; height: 21px; }
.lcorner { width: 27px; background: #f4f4f4; }
.lname { flex: 1; text-align: center; line-height: 20px; color: #4b0a7a; background: linear-gradient(#fbdf9f, #f4bf68); }
.lrow { display: flex; height: 19px; border-bottom: 1px solid #bbb; border-top: 1px solid #bbb; }
.lnum { width: 26px; margin-right: 1px; background: #fbcf8c; text-align: center; font: 10px/17px "Liberation Mono", monospace; color: #4b0a2a; }
.lval { flex: 1; background: #deedfb; padding-left: 18px; line-height: 17px; }
.propbox { height: 402px; background: #fff; border: 1px solid #999; border-bottom-width: 2px; padding: 2px 0 0 1px; margin-top: 1px; }
.ptable { display: grid; grid-template-columns: 84px 94px; grid-auto-rows: 21px; width: 178px; }
.pc { border-right: 1px solid #bbb; border-bottom: 1px solid #bbb; line-height: 20px; padding-left: 2px; white-space: nowrap; }
.ph1 { background: linear-gradient(#fbfbfb, #e9e9e9); }
.ph2 { background: linear-gradient(#fbdf9f, #f4bf68); color: #4b0a7a; }
.blue { color: #0000ff; padding-left: 19px; }
.gray { color: #8a8a8a; }
.gray.ind { padding-left: 19px; }
.sel { background: #deedfb; }
.lastr { height: 19px; line-height: 18px; }
.plus { display: inline-block; width: 12px; height: 12px; margin: 0 5px 0 1px; border: 1px solid #bbb; background: #eee; font: 12px/10px "Liberation Sans", sans-serif; text-align: center; vertical-align: -1px; }

/* work area */
.work { width: 1138px; flex: none; display: flex; flex-direction: column; }
.rowtb { height: 27px; display: flex; flex: none; }
.tb { display: flex; align-items: center; background: #f2f2f2; border: 1px solid #dcdcdc; border-bottom-width: 2px; position: relative; white-space: nowrap; }
.grip { width: 5px; height: 18px; flex: none; background: radial-gradient(circle at 1px 1px, #aaa 1px, transparent 1.2px) 1px 0 / 3px 3px; }
.tb1 { margin-left: 2px; width: 492px; height: 27px; }
.tb2 { margin-left: 10px; width: 337px; height: 27px; padding-left: 8px; gap: 1px; }
.tb2 .tbtn { padding: 0 3px; }
.tb2 .tbtn span { margin-left: 4px; }
.tbmini { margin-left: 708px; width: 33px; height: 26px; }
.tb3 { margin-left: 2px; width: 711px; height: 27px; }
.tb4 { margin-left: 2px; width: 791px; height: 28px; }
.combo { height: 21px; background: #fff; display: flex; align-items: center; padding-left: 2px; flex: none; margin-left: 4px; }
.combo span { flex: 1; }
.combo b { width: 12px; height: 21px; background: #dcdcdc; border: 1px solid #888; border-radius: 1px; position: relative; }
.combo b::after { content: ""; position: absolute; left: 2px; top: 8px; border: 3px solid transparent; border-top: 4px solid #111; border-bottom: 0; }
.w56 { width: 56px; } .w68 { width: 68px; }
.sep { width: 1px; height: 21px; background: #a0a0a0; flex: none; }
.s1 { margin: 0 5px 0 3px; }
.tbtn { height: 23px; padding: 0 2px; display: flex; align-items: center; flex: none; }
.tbtn span { margin-left: 3px; }
.tbtn.on { border: 1px solid #777; border-radius: 3px; background: #e8e8e8; padding: 0 4px; }
.w50 { width: 51px; } .w73 { width: 73px; margin-left: 1px; }
.tbtn.dis { color: #999; }
.pickb { margin-left: 5px; }
.selbtn { width: 51px; margin-left: 2px; padding-left: 8px !important; }
.sd { margin: 0 4px 0 2px; }
.s2 { margin: 0 3px 0 0; }
.s3 { margin: 0 3px 0 0; }
.hidsp { margin-left: 84px; }
.tb3 .tbtn { padding-left: 4px; padding-right: 3px; }
.tb3 .lastpos { margin-left: 2px; }

.stage { height: 623px; display: flex; flex: none; margin-left: 2px; }
.vtb { width: 27px; flex: none; background: #f2f2f2; display: flex; flex-direction: column; align-items: center; padding-top: 11px; position: relative; }
.vi { display: flex; flex-direction: column; align-items: center; width: 100%; flex: none; }
.h26 { height: 18px; } .h24 { height: 23px; padding-top: 4px; } .h22 { height: 22px; padding-top: 3px; }
.vsep { width: 18px; height: 1px; background: #b0b0b0; margin: 3px 0; flex: none; }
.lab { font-size: 12px; line-height: 13.5px; padding-top: 2px; }
.l42 { height: 42px; } .l47 { height: 47px; } .l51 { height: 51px; } .l46 { height: 46px; }
.l50 { height: 50px; }
.lab span { margin-top: 1px; display: block; text-align: center; }
.tri { display: block; margin-top: 2px; border: 2px solid transparent; border-top: 3px solid #666; border-bottom: 0; width: 0; }
.vi.dis { color: #999; }
.chev { position: absolute; left: 3px; top: 601px; width: 20px; height: 14px; text-align: center; font: 14px/14px "Liberation Sans", sans-serif; transform: rotate(90deg); }
.canvas { display: block; flex: none; }
.gl path { stroke: #008000; fill: none; stroke-width: 1; shape-rendering: crispEdges; }
.gl path:last-child { shape-rendering: auto; }
.bl path { stroke: #0000ff; fill: none; shape-rendering: crispEdges; }
.bl path.dk { stroke: #0000b8; }
.cir use { fill: none; stroke: #067a06; stroke-width: 1; }
.lbl text { fill: #e2e2e2; font: 16px "DejaVu Sans", sans-serif; text-anchor: middle; dominant-baseline: central; }
.dim text { fill: #d2d2d2; font: 16px "DejaVu Sans", sans-serif; text-anchor: middle; dominant-baseline: central; paint-order: stroke; stroke: #000; stroke-width: 3px; }
.ax { font: 200 15px "DejaVu Sans", sans-serif; }

.cdis { color: #8a8a8a; background: #ececec; }
.cdis b { background: #ececec; border-color: #aaa; }
.cdis b::after { border-top-color: #888; }
.s4 { margin: 0 4px 0 4px; }
.s5 { margin: 0 4px 0 4px; }
.lt { color: #8c8c8c; font-family: "Liberation Sans", sans-serif; font-size: 13px; flex: none; }
.mm { margin-left: 4px; }
.yl { margin-left: 5px; }
.spin { width: 55px; height: 21px; margin-left: 4px; flex: none; background: #f0f0f0; border: 1px solid #fafafa; color: #999; display: flex; align-items: center; justify-content: flex-end; position: relative; padding-right: 17px; font: 13px "Liberation Sans", sans-serif; }
.spin i { position: absolute; right: 0; top: 0; width: 13px; height: 19px; background: linear-gradient(#e6e6e6 48%, #bbb 48%, #bbb 52%, #e6e6e6 52%); border: 1px solid #ccc; }
.chk { width: 12px; height: 12px; border: 1px solid #999; background: linear-gradient(135deg,#ddd,#fff); flex: none; }
.orth { margin-left: 183px; padding: 0 !important; }
.orth span { margin-left: 4px; }
.tb4 .tbtn { padding: 0 3px; }
.tb4 .tbtn.on { padding: 0 3px; margin-left: 1px; }
.tb4 .tbtn span { margin-left: 4px; }
.tb4 .first-snap { margin-left: 5px; }
.tb4 .coordb { margin-left: 5px; }
.w49 { width: 50px; }

.tabs { height: 21px; margin-top: 3px; width: 1138px; padding-left: 11px; display: flex; background: #f9f9f9; border-top: 2px solid #808080; border-bottom: 1px solid #909090; }
.tab { position: relative; padding: 0 4.500px; line-height: 16px; font-size: 12px; height: 17px; white-space: nowrap; }
.tab::before, .tab::after { content: ""; position: absolute; top: 0; height: 17px; border-left: 1px solid #444; }
.tab::before { left: 0; transform: skewX(18deg); }
.tab::after { right: 0; transform: skewX(-18deg); }
.tab em { font-size: 9px; }
.tab.act { background: #fff; }
.tab.t1 { padding: 0 5px; }

.status { height: 19px; display: flex; background: #f0edeb; }
.st { border-right: 1px solid #d0cfcf; height: 19px; line-height: 18px; flex: none; white-space: nowrap; padding-left: 2px; }
.s-a { width: 149px; padding-left: 0; } .s-b { width: 80px; } .s-c { width: 130px; }
.s-d { width: 50px; } .s-e { width: 1040px; }
.fps { display: inline-block; margin-left: 984px; }
.s-f { border-right: 0; flex: 1; }

/* context menu */
.menu { position: absolute; left: 757px; top: 22px; width: 185px; height: 770px; padding: 1px 1px 0; background: #f0f0f0; border: 1px solid #979797; box-shadow: 2px 2px 3px rgba(0,0,0,.35); }
.mi { height: 21px; display: flex; align-items: center; padding-left: 4px; position: relative; white-space: nowrap; }
.mi span { margin-left: 5px; }
.mi kbd { position: absolute; left: 144px; font: 12px "Noto Sans CJK SC", sans-serif; }
.mi.dis { color: #8e8e8e; }
.ms { height: 12px; margin: 0 15px 0 13px; position: relative; }
.ms::after { content: ""; position: absolute; left: 0; right: 0; top: 5px; height: 1px; background: #a4a4a4; }
.ms.first { height: 13px; }
.chk-on::before { content: ""; position: absolute; left: 2px; top: 0; width: 20px; height: 20px; border: 1px solid #777; border-radius: 3px; background: #e8e8e8; }
.chk-on .i { position: relative; }
.sub { position: absolute; right: 4px; top: 7px; border: 4px solid transparent; border-left: 5px solid #111; border-right: 0; }
.sub::before { content: ""; position: absolute; left: -11px; top: -11px; height: 21px; border-left: 1px solid #a0a0a0; }

.annot { position: absolute; left: 0; top: 0; pointer-events: none; }

.ime { position: absolute; left: 1409px; top: 331px; display: flex; gap: 1px; }
.key { width: 36px; height: 39px; background: #fbfbfb; border-radius: 4px; border: 1px solid #cfcfcf; border-bottom: 5px solid #a9a9a9; display: flex; align-items: center; justify-content: center; }
.zh { font-size: 17px; color: #6f6f6f; line-height: 20px; }

.net { position: absolute; left: 1472px; top: 669px; width: 117px; height: 50px; }
.pill { position: absolute; left: 30px; top: 6px; width: 87px; height: 38px; background: linear-gradient(#f8f8f8,#dcdcdc); border-radius: 19px 0 0 19px; box-shadow: 0 3px 6px rgba(0,0,0,.3); display: flex; align-items: center; padding-left: 22px; overflow: hidden; }
.speeds { width: 43px; font: 9.500px/15px "Liberation Sans", sans-serif; color: #000; }
.sp { display: flex; align-items: center; justify-content: space-between; }
.sp i { width: 0; height: 0; border: 3px solid transparent; }
.sp i.up { border-bottom: 7px solid #ea5a4a; border-top: 0; }
.sp i.dn { border-top: 7px solid #2a9a5a; border-bottom: 0; }
.plusb { position: absolute; left: 69px; top: 8px; width: 20px; height: 20px; border-radius: 50%; background: #3a80d8; color: #fff; font: bold 15px/20px "Liberation Sans", sans-serif; text-align: center; box-shadow: 3px -5px 0 -2px #e04040; }
.ball { position: absolute; left: 0; top: 0; width: 48px; height: 48px; border-radius: 50%; border: 2px solid #e8e8e8; background: linear-gradient(#2f8a5a 0, #2f8a5a 18%, #3fc46a 20%, #45c96e 70%, #2aa050 100%); color: #fff; font: 15px/44px "Liberation Sans", sans-serif; text-align: center; box-shadow: 0 2px 5px rgba(0,0,0,.5); }
```
